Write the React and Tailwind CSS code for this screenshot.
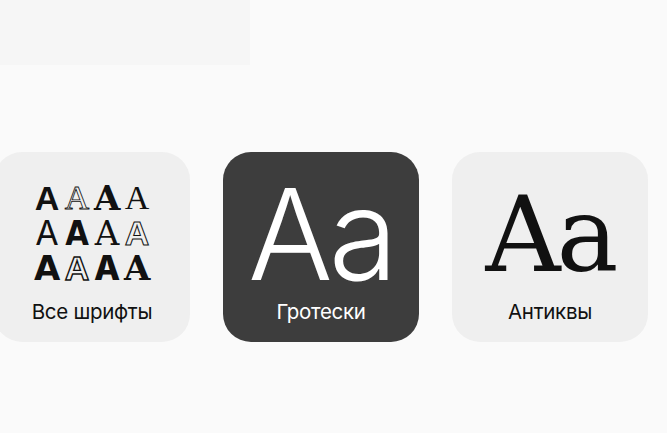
import React from 'react';

// образцы начертаний для карточки "Все шрифты"
const samples = [
  { cls: "font-['Liberation_Sans',sans-serif] font-bold" },
  { cls: "font-['Liberation_Serif',serif] font-thin text-transparent [-webkit-text-stroke:0.8px_#111]" },
  { cls: "font-['DejaVu_Serif',serif] font-bold" },
  { cls: "font-['Liberation_Serif',serif]" },
  { cls: "font-['Inter',sans-serif] font-normal" },
  { cls: "font-['DejaVu_Sans_Condensed','DejaVu_Sans',sans-serif] font-bold" },
  { cls: "font-['DejaVu_Serif',serif]" },
  { cls: "font-['Liberation_Sans',sans-serif] font-bold text-transparent [-webkit-text-stroke:1px_#111]" },
  { cls: "font-['DejaVu_Sans',sans-serif] font-bold" },
  { cls: "font-['Liberation_Sans',sans-serif] font-bold text-transparent [-webkit-text-stroke:1.4px_#111]" },
  { cls: "font-['Inter',sans-serif] font-extrabold" },
  { cls: "font-['DejaVu_Serif',serif] font-bold" },
];

const Card = ({ dark, label, children }) => (
  <div
    className={`flex h-[190px] w-[196px] shrink-0 flex-col items-center rounded-[28px] ${
      dark ? 'bg-[#3d3d3d] text-white' : 'bg-[#efefef] text-[#111]'
    }`}
  >
    <div className="flex w-full flex-1 items-center justify-center">{children}</div>
    <p className="mb-[20px] font-['Inter',sans-serif] text-[20.5px] leading-[20px] tracking-[-0.3px]">{label}</p>
  </div>
);

export default function App() {
  return (
    <div className="h-[433px] w-[667px] overflow-hidden bg-[#fafafa]">
      {/* заглушка заголовка */}
      <div className="h-[65px] w-[250px] bg-[#f6f6f6]" />

      <div className="ml-[-6px] mt-[87px] flex gap-[33px]">
        <Card label="Все шрифты">
          <div className="mt-[12px] grid grid-cols-4 gap-x-[4px] gap-y-[1px] text-[34px] leading-[34px]">
            {samples.map((s, i) => (
              <span key={i} className={`w-[26px] text-center ${s.cls}`}>
                A
              </span>
            ))}
          </div>
        </Card>

        <Card dark label="Гротески">
          <span className="mt-[14px] font-['Inter',sans-serif] text-[126px] font-light leading-[100px] tracking-[-4px]">
            Aa
          </span>
        </Card>

        <Card label="Антиквы">
          <span className="mt-[16px] font-['DejaVu_Serif',serif] text-[104px] leading-[90px] tracking-[-4px]">Aa</span>
        </Card>
      </div>
    </div>
  );
}
